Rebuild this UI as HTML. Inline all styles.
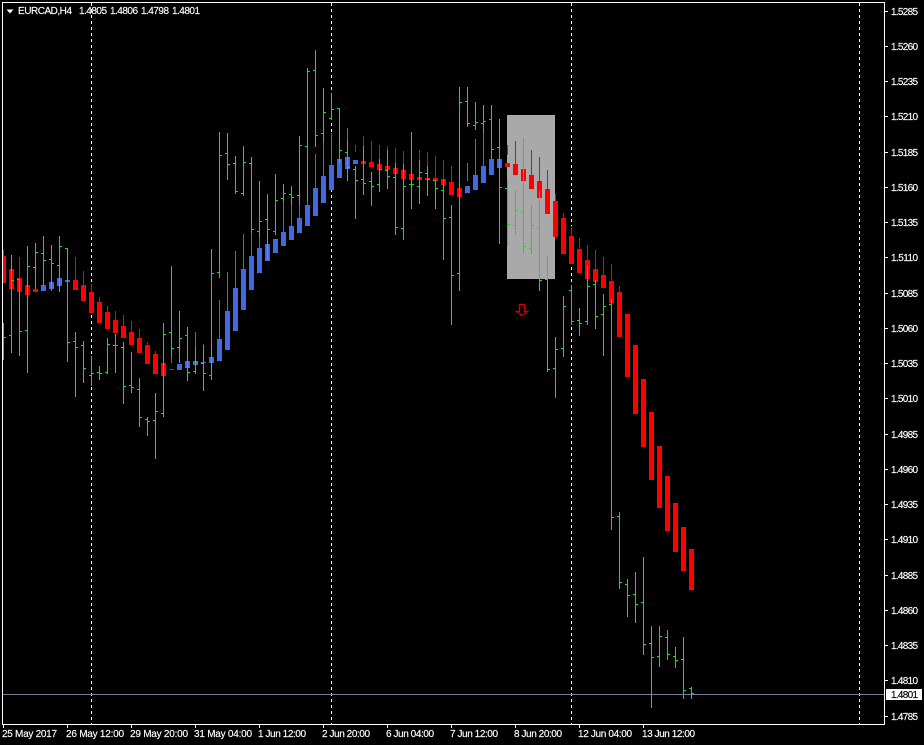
<!DOCTYPE html>
<html><head><meta charset="utf-8"><title>EURCAD,H4</title>
<style>
html,body{margin:0;padding:0;background:#000;width:924px;height:745px;overflow:hidden}
svg{display:block}
text{font-family:"Liberation Sans",sans-serif;font-size:10px;fill:#fff;stroke:#fff;stroke-width:.15}
</style></head><body>
<svg width="924" height="745" viewBox="0 0 924 745" xmlns="http://www.w3.org/2000/svg">
<rect width="924" height="745" fill="#000"/>
<g shape-rendering="crispEdges">
<!-- gray rectangle -->
<rect x="507" y="115" width="48" height="164" fill="#a9a9a9"/>
<!-- period separators -->
<path d="M91.5 3V724M331.5 3V724M571.5 3V724M859.5 3V724" stroke="#fff" stroke-width="1" stroke-dasharray="3 3" fill="none"/>
<!-- bid line -->
<rect x="3" y="694" width="881" height="1" fill="#708090"/>
<!-- blue wicks -->
<path fill="#4169e1" d="M43 278h1v7h-1zM171 357h1v6h-1zM195 332h1v29h-1zM219 300h1v39h-1zM227 272h1v39h-1zM235 251h1v37h-1zM243 234h1v35h-1zM251 233h1v23h-1zM259 237h1v11h-1zM283 202h1v30h-1zM291 205h1v21h-1zM299 205h1v13h-1zM307 201h1v4h-1zM315 154h1v34h-1zM323 143h1v33h-1zM331 133h1v32h-1zM347 128h1v29h-1zM467 163h1v18h-1zM475 139h1v36h-1zM483 133h1v33h-1z"/>
<!-- red wicks -->
<path fill="#f00" d="M3 250h1v6h-1zM19 257h1v21h-1zM75 257h1v23h-1zM83 271h1v14h-1zM91 284h1v8h-1zM99 297h1v5h-1zM107 306h1v6h-1zM115 311h1v9h-1zM123 315h1v11h-1zM131 321h1v11h-1zM139 329h1v9h-1zM147 342h1v3h-1zM155 351h1v3h-1zM203 344h1v1h-1zM355 145h1v7h-1zM363 136h1v25h-1zM371 141h1v21h-1zM379 145h1v19h-1zM387 146h1v20h-1zM395 148h1v20h-1zM403 151h1v19h-1zM419 150h1v27h-1zM427 152h1v26h-1zM435 156h1v22h-1zM443 160h1v19h-1zM451 166h1v16h-1zM507 145h1v10h-1zM515 141h1v23h-1zM531 150h1v25h-1zM539 157h1v24h-1zM547 170h1v19h-1zM555 194h1v7h-1zM563 213h1v5h-1zM571 226h1v10h-1zM579 238h1v11h-1zM587 245h1v15h-1zM595 250h1v19h-1zM603 257h1v18h-1zM611 264h1v17h-1zM619 286h1v6h-1z"/>
<!-- blue bodies -->
<path fill="#4169e1" d="M41 285h5v6h-5zM49 282h5v7h-5zM57 278h5v8h-5zM65 280h5v2h-5zM177 364h5v6h-5zM185 361h5v7h-5zM193 361h5v4h-5zM201 362h5v1h-5zM209 357h5v6h-5zM217 339h5v22h-5zM225 311h5v39h-5zM233 288h5v43h-5zM241 269h5v41h-5zM249 256h5v34h-5zM257 248h5v25h-5zM265 244h5v17h-5zM273 239h5v14h-5zM281 232h5v14h-5zM289 226h5v14h-5zM297 218h5v15h-5zM305 205h5v21h-5zM313 188h5v28h-5zM321 176h5v27h-5zM329 165h5v25h-5zM337 159h5v19h-5zM345 157h5v12h-5zM353 160h5v4h-5zM465 186h5v7h-5zM473 175h5v15h-5zM481 166h5v17h-5zM489 159h5v16h-5zM497 159h5v9h-5z"/>
<!-- red bodies -->
<path fill="#f00" d="M3 256h3v27h-3zM9 269h5v20h-5zM17 278h5v14h-5zM25 285h5v10h-5zM33 289h5v3h-5zM73 280h5v10h-5zM81 285h5v16h-5zM89 292h5v21h-5zM97 302h5v21h-5zM105 312h5v17h-5zM113 320h5v13h-5zM121 326h5v12h-5zM129 332h5v13h-5zM137 338h5v15h-5zM145 345h5v19h-5zM153 354h5v20h-5zM161 363h5v13h-5zM169 369h5v1h-5zM361 161h5v3h-5zM369 162h5v5h-5zM377 164h5v6h-5zM385 166h5v4h-5zM393 168h5v6h-5zM401 170h5v9h-5zM409 174h5v6h-5zM417 177h5v3h-5zM425 178h5v2h-5zM433 178h5v3h-5zM441 179h5v6h-5zM449 182h5v13h-5zM457 188h5v9h-5zM505 163h5v4h-5zM513 164h5v11h-5zM521 169h5v12h-5zM529 175h5v14h-5zM537 181h5v17h-5zM545 189h5v25h-5zM553 201h5v36h-5zM561 218h5v36h-5zM569 236h5v28h-5zM577 249h5v24h-5zM585 260h5v19h-5zM593 269h5v13h-5zM601 275h5v13h-5zM609 281h5v22h-5zM617 292h5v45h-5zM625 314h5v63h-5zM633 345h5v69h-5zM641 379h5v68h-5zM649 412h5v68h-5zM657 446h5v62h-5zM665 476h5v55h-5zM673 503h5v49h-5zM681 527h5v44h-5zM689 549h5v41h-5z"/>
<!-- green bars -->
<path fill="#16e016" d="
M3 323h1v37h-1zM4 337h2v1h-2z
M11 255h1v98h-1zM9 335h2v1h-2zM12 280h2v1h-2z
M19 279h1v77h-1zM17 279h2v1h-2zM20 331h2v1h-2z
M27 246h1v127h-1zM25 330h2v1h-2zM28 266h2v1h-2z
M35 243h1v46h-1zM33 267h2v1h-2zM36 252h2v1h-2z
M43 236h1v49h-1zM41 253h2v1h-2zM44 260h2v1h-2z
M51 245h1v46h-1zM49 259h2v1h-2zM52 263h2v1h-2z
M59 236h1v56h-1zM57 265h2v1h-2zM60 246h2v1h-2z
M67 248h1v114h-1zM65 248h2v1h-2zM68 342h2v1h-2z
M75 332h1v65h-1zM73 341h2v1h-2zM76 347h2v1h-2z
M83 341h1v42h-1zM81 345h2v1h-2zM84 368h2v1h-2z
M91 356h1v30h-1zM89 375h2v1h-2zM92 373h2v1h-2z
M99 366h1v14h-1zM97 372h2v1h-2zM100 373h2v1h-2z
M107 338h1v36h-1zM105 372h2v1h-2zM108 344h2v1h-2z
M115 334h1v39h-1zM113 345h2v1h-2zM116 345h2v1h-2z
M123 342h1v62h-1zM121 347h2v1h-2zM124 386h2v1h-2z
M131 352h1v41h-1zM129 385h2v1h-2zM132 387h2v1h-2z
M139 378h1v49h-1zM137 389h2v1h-2zM140 417h2v1h-2z
M147 417h1v19h-1zM145 419h2v1h-2zM148 421h2v1h-2z
M155 393h1v66h-1zM153 420h2v1h-2zM156 411h2v1h-2z
M163 323h1v94h-1zM161 413h2v1h-2zM164 334h2v1h-2z
M171 266h1v91h-1zM169 332h2v1h-2zM172 348h2v1h-2z
M179 311h1v52h-1zM177 347h2v1h-2zM180 338h2v1h-2z
M187 327h1v54h-1zM185 335h2v1h-2zM188 372h2v1h-2z
M195 347h1v27h-1zM193 371h2v1h-2zM196 362h2v1h-2z
M203 345h1v46h-1zM201 363h2v1h-2zM204 373h2v1h-2z
M211 249h1v131h-1zM209 375h2v1h-2zM212 273h2v1h-2z
M219 132h1v146h-1zM217 272h2v1h-2zM220 155h2v1h-2z
M227 133h1v47h-1zM225 153h2v1h-2zM228 164h2v1h-2z
M235 156h1v38h-1zM233 163h2v1h-2zM236 191h2v1h-2z
M243 146h1v50h-1zM241 193h2v1h-2zM244 162h2v1h-2z
M251 157h1v76h-1zM249 163h2v1h-2zM252 229h2v1h-2z
M259 181h1v56h-1zM257 231h2v1h-2zM260 221h2v1h-2z
M267 194h1v66h-1zM265 219h2v1h-2zM268 229h2v1h-2z
M275 174h1v61h-1zM273 231h2v1h-2zM276 200h2v1h-2z
M283 184h1v18h-1zM281 198h2v1h-2zM284 193h2v1h-2z
M291 186h1v19h-1zM289 194h2v1h-2zM292 197h2v1h-2z
M299 136h1v69h-1zM297 195h2v1h-2zM300 145h2v1h-2z
M307 68h1v133h-1zM305 146h2v1h-2zM308 71h2v1h-2z
M315 50h1v97h-1zM313 70h2v1h-2zM316 135h2v1h-2z
M323 88h1v55h-1zM321 133h2v1h-2zM324 112h2v1h-2z
M331 93h1v27h-1zM329 118h2v1h-2zM332 109h2v1h-2z
M339 108h1v55h-1zM337 108h2v1h-2zM340 150h2v1h-2z
M347 140h1v41h-1zM345 152h2v1h-2zM348 167h2v1h-2z
M355 166h1v53h-1zM353 169h2v1h-2zM356 180h2v1h-2z
M363 146h1v49h-1zM361 179h2v1h-2zM364 183h2v1h-2z
M371 172h1v34h-1zM369 181h2v1h-2zM372 186h2v1h-2z
M379 159h1v33h-1zM377 184h2v1h-2zM380 169h2v1h-2z
M387 150h1v39h-1zM385 170h2v1h-2zM388 176h2v1h-2z
M395 163h1v72h-1zM393 177h2v1h-2zM396 227h2v1h-2z
M403 164h1v76h-1zM401 228h2v1h-2zM404 186h2v1h-2z
M411 132h1v77h-1zM409 184h2v1h-2zM412 184h2v1h-2z
M419 160h1v44h-1zM417 186h2v1h-2zM420 172h2v1h-2z
M427 166h1v30h-1zM425 173h2v1h-2zM428 179h2v1h-2z
M435 180h1v29h-1zM433 180h2v1h-2zM436 188h2v1h-2z
M443 180h1v80h-1zM441 190h2v1h-2zM444 218h2v1h-2z
M451 205h1v120h-1zM449 217h2v1h-2zM452 275h2v1h-2z
M459 87h1v204h-1zM457 273h2v1h-2zM460 102h2v1h-2z
M467 87h1v40h-1zM465 101h2v1h-2zM468 123h2v1h-2z
M475 102h1v28h-1zM473 125h2v1h-2zM476 122h2v1h-2z
M483 105h1v28h-1zM481 123h2v1h-2zM484 121h2v1h-2z
M491 105h1v54h-1zM489 119h2v1h-2zM492 149h2v1h-2z
M499 119h1v125h-1zM497 147h2v1h-2zM500 187h2v1h-2z
M507 179h1v67h-1zM505 188h2v1h-2zM508 224h2v1h-2z
M515 190h1v45h-1zM513 225h2v1h-2zM516 210h2v1h-2z
M523 138h1v115h-1zM521 212h2v1h-2zM524 246h2v1h-2z
M531 205h1v49h-1zM529 248h2v1h-2zM532 225h2v1h-2z
M539 191h1v100h-1zM537 227h2v1h-2zM540 280h2v1h-2z
M547 256h1v116h-1zM545 279h2v1h-2zM548 369h2v1h-2z
M555 337h1v61h-1zM553 368h2v1h-2zM556 349h2v1h-2z
M563 296h1v61h-1zM561 348h2v1h-2zM564 306h2v1h-2z
M571 285h1v40h-1zM569 290h2v1h-2zM572 321h2v1h-2z
M579 308h1v28h-1zM577 320h2v1h-2zM580 323h2v1h-2z
M587 266h1v59h-1zM585 321h2v1h-2zM588 286h2v1h-2z
M595 280h1v49h-1zM593 284h2v1h-2zM596 316h2v1h-2z
M603 294h1v62h-1zM601 314h2v1h-2zM604 306h2v1h-2z
M611 299h1v231h-1zM609 304h2v1h-2zM612 517h2v1h-2z
M619 512h1v77h-1zM617 516h2v1h-2zM620 582h2v1h-2z
M627 579h1v38h-1zM625 584h2v1h-2zM628 595h2v1h-2z
M635 572h1v51h-1zM633 594h2v1h-2zM636 604h2v1h-2z
M643 557h1v98h-1zM641 602h2v1h-2zM644 644h2v1h-2z
M651 626h1v82h-1zM649 643h2v1h-2zM652 657h2v1h-2z
M659 626h1v41h-1zM657 656h2v1h-2zM660 636h2v1h-2z
M667 630h1v30h-1zM665 637h2v1h-2zM668 654h2v1h-2z
M675 647h1v21h-1zM673 656h2v1h-2zM676 660h2v1h-2z
M683 637h1v62h-1zM681 659h2v1h-2zM684 690h2v1h-2z
M691 687h1v12h-1zM689 688h2v1h-2zM692 693h2v1h-2z"/>
<!-- frame -->
<path fill="#fff" d="M2 2h883v1H2zM2 2h1v723H2zM884 2h1v723h-1zM2 724h883v1H2z"/>
<!-- right axis ticks -->
<path fill="#fff" d="M885 11h3v1h-3zM885 46h3v1h-3zM885 81h3v1h-3zM885 116h3v1h-3zM885 152h3v1h-3zM885 187h3v1h-3zM885 222h3v1h-3zM885 257h3v1h-3zM885 293h3v1h-3zM885 328h3v1h-3zM885 363h3v1h-3zM885 398h3v1h-3zM885 434h3v1h-3zM885 469h3v1h-3zM885 504h3v1h-3zM885 539h3v1h-3zM885 575h3v1h-3zM885 610h3v1h-3zM885 645h3v1h-3zM885 680h3v1h-3zM885 716h3v1h-3z"/>
<!-- bottom axis ticks -->
<path fill="#fff" d="M3 725h1v3H3zM67 725h1v3h-1zM131 725h1v3h-1zM195 725h1v3h-1zM259 725h1v3h-1zM323 725h1v3h-1zM387 725h1v3h-1zM451 725h1v3h-1zM515 725h1v3h-1zM579 725h1v3h-1zM643 725h1v3h-1z"/>
<!-- current price label -->
<rect x="886" y="689" width="36" height="11" fill="#fff"/>
</g>
<!-- down arrow -->
<path d="M519.5 304.5h5v7h3l-5.500 4-5.500-4h3z" fill="none" stroke="#d00000" stroke-width="1.300"/>
<!-- header triangle -->
<path d="M6.500 9.500h7l-3.500 4z" fill="#fff"/>
<text x="18" y="14" textLength="54" lengthAdjust="spacing">EURCAD,H4</text>
<text x="79" y="14" textLength="28" lengthAdjust="spacing">1.4805</text>
<text x="110" y="14" textLength="28" lengthAdjust="spacing">1.4806</text>
<text x="141" y="14" textLength="28" lengthAdjust="spacing">1.4798</text>
<text x="172" y="14" textLength="28" lengthAdjust="spacing">1.4801</text>
<!-- price axis labels -->
<text x="891" y="15" textLength="27" lengthAdjust="spacing">1.5285</text>
<text x="891" y="50" textLength="27" lengthAdjust="spacing">1.5260</text>
<text x="891" y="85" textLength="27" lengthAdjust="spacing">1.5235</text>
<text x="891" y="120" textLength="27" lengthAdjust="spacing">1.5210</text>
<text x="891" y="156" textLength="27" lengthAdjust="spacing">1.5185</text>
<text x="891" y="191" textLength="27" lengthAdjust="spacing">1.5160</text>
<text x="891" y="226" textLength="27" lengthAdjust="spacing">1.5135</text>
<text x="891" y="261" textLength="27" lengthAdjust="spacing">1.5110</text>
<text x="891" y="297" textLength="27" lengthAdjust="spacing">1.5085</text>
<text x="891" y="332" textLength="27" lengthAdjust="spacing">1.5060</text>
<text x="891" y="367" textLength="27" lengthAdjust="spacing">1.5035</text>
<text x="891" y="402" textLength="27" lengthAdjust="spacing">1.5010</text>
<text x="891" y="438" textLength="27" lengthAdjust="spacing">1.4985</text>
<text x="891" y="473" textLength="27" lengthAdjust="spacing">1.4960</text>
<text x="891" y="508" textLength="27" lengthAdjust="spacing">1.4935</text>
<text x="891" y="543" textLength="27" lengthAdjust="spacing">1.4910</text>
<text x="891" y="579" textLength="27" lengthAdjust="spacing">1.4885</text>
<text x="891" y="614" textLength="27" lengthAdjust="spacing">1.4860</text>
<text x="891" y="649" textLength="27" lengthAdjust="spacing">1.4835</text>
<text x="891" y="684" textLength="27" lengthAdjust="spacing">1.4810</text>
<text x="891" y="720" textLength="27" lengthAdjust="spacing">1.4785</text>
<text x="891" y="698" textLength="27" lengthAdjust="spacing" style="fill:#000;stroke:#000">1.4801</text>
<!-- time axis labels -->
<text x="2" y="737" textLength="55" lengthAdjust="spacing">25 May 2017</text>
<text x="66" y="737" textLength="58" lengthAdjust="spacing">26 May 12:00</text>
<text x="130" y="737" textLength="58" lengthAdjust="spacing">29 May 20:00</text>
<text x="194" y="737" textLength="58" lengthAdjust="spacing">31 May 04:00</text>
<text x="258" y="737" textLength="48" lengthAdjust="spacing">1 Jun 12:00</text>
<text x="322" y="737" textLength="48" lengthAdjust="spacing">2 Jun 20:00</text>
<text x="386" y="737" textLength="48" lengthAdjust="spacing">6 Jun 04:00</text>
<text x="450" y="737" textLength="48" lengthAdjust="spacing">7 Jun 12:00</text>
<text x="514" y="737" textLength="48" lengthAdjust="spacing">8 Jun 20:00</text>
<text x="578" y="737" textLength="54" lengthAdjust="spacing">12 Jun 04:00</text>
<text x="642" y="737" textLength="53" lengthAdjust="spacing">13 Jun 12:00</text>
</svg>
</body></html>
